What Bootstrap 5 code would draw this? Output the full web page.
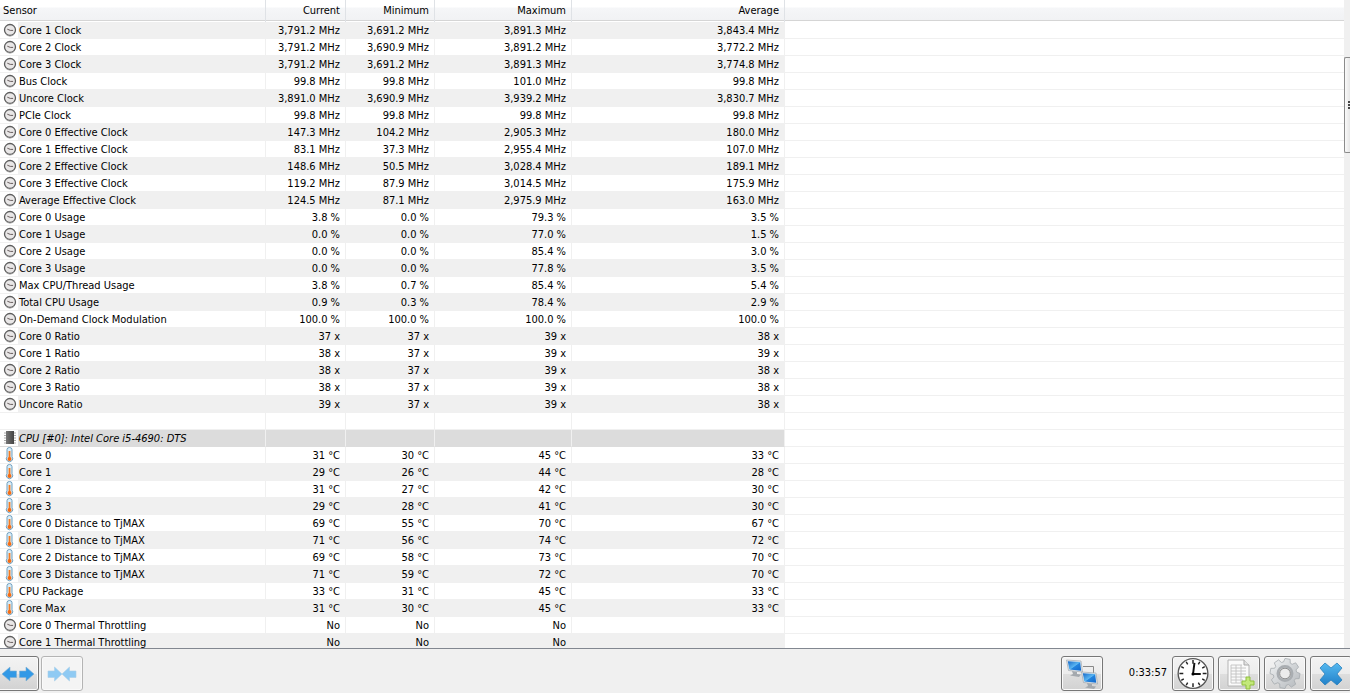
<!DOCTYPE html>
<html lang="en">
<head>
<meta charset="utf-8">
<meta name="viewport" content="width=device-width, initial-scale=1">
<title>Sensor Status</title>
<link href="https://cdn.jsdelivr.net/npm/bootstrap@5.3.0/dist/css/bootstrap.min.css" rel="stylesheet">
<style>
body { font-family: Tahoma, "DejaVu Sans Condensed", "Noto Sans", sans-serif; font-size: 11px; line-height: 16px; color: #000; background: #fff; }
.sensor-table { table-layout: fixed; border-collapse: separate; border-spacing: 0; white-space: nowrap; }
.sensor-table th { height: 22px; padding: 0 5px 0 0; font-weight: 400; text-align: right; border-right: 1px solid #dfe2e6; box-shadow: inset 0 -1px #fff, inset 0 -2px #d5d5d5; background: linear-gradient(#fff 7px, #f5f6f8 8px, #f1f2f4 20px); }
.sensor-table th:first-child { text-align: left; padding-left: 3px; }
.sensor-table th:last-child, .sensor-table td:last-child { border-right: 0; }
.sensor-table td { height: 17px; line-height: 14px; padding: 2px 5px 0 0; text-align: right; border-right: 1px solid #f0f0f0; border-bottom: 1px solid #f0f0f0; }
.sensor-table tbody tr:nth-child(odd) td:not(:last-child) { background: #f0f0f0; }
.sensor-table tbody tr.group-row td:not(:last-child) { background: #dcdcdc; border-bottom-color: #dcdcdc; }
.sensor-table tbody tr.group-row td:first-child { font-style: italic; }
.sensor-table td:first-child { padding: 0; text-align: left; }
.sensor-label { height: 16px; line-height: 18px; }
.sensor-icon { width: 18px; height: 16px; padding-left: 3px; margin-right: 1px; background: #fff; }
.sensor-icon svg { display: block; width: 14px; height: 16px; }
.scroll-track { width: 6px; padding-top: 57px; background: #f0f0f0; }
.scroll-thumb { height: 96px; border: 1px solid #8b8b8b; border-right: 0; border-radius: 2px 0 0 2px; background: linear-gradient(90deg, #fafafa, #e6e6e6); }
.scroll-grip { width: 2px; height: 8px; background: repeating-linear-gradient(#444 0 2px, #eee 2px 3px); }
.tool-bar { height: 45px; border-top: 1px solid #828790; background: #f0f0f0; padding-top: 7px; margin: 0 -2px 0 -3px; }
.tool-btn { width: 42px; height: 35px; border: 1px solid #777; border-radius: 3px; background: linear-gradient(#f3f3f3, #ececec 50%, #dedede 51%, #d2d2d2); box-shadow: inset 0 0 0 1px #fafafa; }
.tool-btn:disabled { border-color: #b4b4b4; background: #f4f4f4; opacity: 1; }
.tool-btn svg { display: block; }
.clock-text { line-height: 33px; margin: 0 5px 0 26px; }
.tool-gap { margin-left: 2px; }
</style>
</head>
<body class="vh-100 overflow-hidden d-flex flex-column">
<svg width="0" height="0" class="position-absolute" aria-hidden="true">
  <defs>
    <linearGradient id="chipFill"><stop stop-color="#777"/><stop offset="1" stop-color="#444"/></linearGradient>
    <linearGradient id="blueFill" x2="0" y2="1"><stop stop-color="#55b9f0"/><stop offset="1" stop-color="#2281c9"/></linearGradient>
    <linearGradient id="screenFill" x2="1" y2="1"><stop stop-color="#1769c8"/><stop offset=".5" stop-color="#5ab6f2"/><stop offset=".55" stop-color="#2484de"/><stop offset="1" stop-color="#1268cc"/></linearGradient>
    <linearGradient id="steelFill" x2="1" y2="1"><stop stop-color="#f2f4f5"/><stop offset="1" stop-color="#b3b7bb"/></linearGradient>
    <symbol id="gauge" viewBox="0 1 14 16"><circle cx="7" cy="9" r="5.500" fill="#e9e7e7" stroke="#5c5c5c" stroke-width="1.300"/><path d="M3 13.500a6 6 0 0 0 8 0" fill="none" stroke="#999" stroke-width=".8"/><path d="M4.300 8.200l3 1.200h2.800" fill="none" stroke="#665c5c" stroke-width="1"/></symbol>
    <symbol id="thermo" viewBox="0 0 14 16"><path d="M4 2.500a2.500 2 0 0 1 5 0v7.300a3.200 3 0 1 1-5 0z" fill="#d9edf8" stroke="#6f9fbf" stroke-width="1"/><path d="M6.500 4v8" stroke="#f57a20" stroke-width="1.800"/><circle cx="6.500" cy="12" r="2" fill="#f56c14"/></symbol>
    <symbol id="chip" viewBox="0 0 14 16"><path d="M1 3h12M1 5.500h12M1 8h12M1 10.500h12M1 13h12" stroke="#aaa"/><path d="M3 1h8v13H3z" fill="url(#chipFill)"/></symbol>
    <symbol id="screen" viewBox="0 0 19 19"><path d="M7 12l5 1v2l4 .5-2 2.500-9-1.500 3-1.500z" fill="#a4a9ae"/><path d="M1.500 1l14.500 1 1.500 11-14-1.500z" fill="#e3e8ec" stroke="#979ea4" stroke-width=".6"/><path d="M2.800 2.200l12.300.8 1.100 8.700-11.900-1.200z" fill="url(#screenFill)"/></symbol>
  </defs>
</svg>

<main class="d-flex flex-grow-1 overflow-hidden">
  <div class="flex-grow-1 overflow-hidden">
    <table class="sensor-table w-100">
      <colgroup><col style="width:266px"><col style="width:80px"><col style="width:89px"><col style="width:137px"><col style="width:213px"><col></colgroup>
      <thead><tr><th scope="col">Sensor</th><th scope="col">Current</th><th scope="col">Minimum</th><th scope="col">Maximum</th><th scope="col">Average</th><th></th></tr></thead>
      <tbody id="sensorRows"></tbody>
    </table>
  </div>
  <div class="scroll-track flex-shrink-0"><div class="scroll-thumb d-flex align-items-center justify-content-end"><div class="scroll-grip"></div></div></div>
</main>

<footer class="tool-bar flex-shrink-0 d-flex align-items-start">
  <button type="button" class="tool-btn p-0 d-flex align-items-center justify-content-center" aria-label="Expand columns"><svg width="34" height="20" viewBox="0 0 34 20" fill="#3299e6" stroke="#7faed0" stroke-width=".6"><path d="M1 10l8-7v4h6.500v6.500H9V17z"/><path d="M33 10l-8-7v4h-6.500v6.500H25V17z"/></svg></button>
  <button type="button" disabled class="tool-btn tool-gap p-0 d-flex align-items-center justify-content-center" aria-label="Shrink columns"><svg width="30" height="20" viewBox="0 0 30 20" fill="#8fcaf3" stroke="#a9cfe8" stroke-width=".6"><path d="M15 10L7.500 3v4H1v6.500h6.500V17z"/><path d="M15 10l7.500-7v4H29v6.500h-6.500V17z"/></svg></button>

  <button type="button" class="tool-btn p-0 ms-auto d-flex align-items-center justify-content-center" aria-label="Network"><svg width="34" height="32" viewBox="0 0 34 32"><path d="M18 8.500h10.500V16" fill="none" stroke="#888"/><use href="#screen" x="0" y="1" width="19" height="19"/><use href="#screen" x="15" y="13" width="19" height="19"/></svg></button>
  <span class="clock-text">0:33:57</span>
  <button type="button" class="tool-btn p-0 d-flex align-items-center justify-content-center" aria-label="Reset clock"><svg width="34" height="33" viewBox="0 0 34 34"><circle cx="17" cy="17" r="15.300" fill="#fff" stroke="#555" stroke-width="1.400"/><g stroke="#222" stroke-width="1.500"><path d="M17 3v4M17 27v4M3 17h4M27 17h4"/><path d="M10 4.900l1.500 2.600M22.500 26.500l1.500 2.600M4.900 10l2.600 1.500M26.500 22.500l2.600 1.500M24 4.900l-1.500 2.600M11.500 26.500L10 29.100M4.900 24l2.600-1.500M26.500 11.500l2.600-1.500"/></g><path d="M17 18l1.500-12M16 17.500h9" stroke="#111" stroke-width="2" fill="none"/><circle cx="17" cy="17.500" r="1.600"/></svg></button>
  <button type="button" class="tool-btn p-0 ms-1 d-flex align-items-center justify-content-center" aria-label="Add log"><svg width="32" height="32" viewBox="0 0 32 32"><path d="M5 2h16l5 5v21H5z" fill="#fafafa" stroke="#b4b4b4"/><path d="M21 2v5h5" fill="#e2e2e2" stroke="#aaa"/><path d="M8 7h11M8 10h15M8 13h15M8 16h15M8 19h15M8 22h12M8 25h12M8 7v18M13 7v18M18 7v18" stroke="#c2c2c2" stroke-width=".9" fill="none"/><path d="M23 19h4v4h4v4h-4v4h-4v-4h-4v-4h4z" fill="#c3e87a" stroke="#8fbf3d"/></svg></button>
  <button type="button" class="tool-btn p-0 ms-1 d-flex align-items-center justify-content-center" aria-label="Settings"><svg width="34" height="33" viewBox="-17 -17 34 34"><g fill="url(#steelFill)" stroke="#a5a9ad" stroke-width=".8" stroke-linejoin="round"><path id="gear"/></g><circle r="7.500" fill="none" stroke="#a9adb1" stroke-width="2.500"/><circle r="5.500" fill="#ececec" stroke="#888"/></svg></button>
  <button type="button" class="tool-btn p-0 ms-1 d-flex align-items-center justify-content-center" aria-label="Close"><svg width="26" height="26" viewBox="0 0 26 26"><path d="M2 7l5-5 6 5 6-5 5 5-5 6 5 6-5 5-6-5-6 5-5-5 5-6z" fill="url(#blueFill)" stroke="#2c82bd" stroke-width=".8"/></svg></button>
</footer>

<script src="https://cdn.jsdelivr.net/npm/bootstrap@5.3.0/dist/js/bootstrap.bundle.min.js"></script>
<script>
// icon | name | unit | current | minimum | maximum | average
const sensors = `gauge|Core 1 Clock| MHz|3,791.2|3,691.2|3,891.3|3,843.4
gauge|Core 2 Clock| MHz|3,791.2|3,690.9|3,891.2|3,772.2
gauge|Core 3 Clock| MHz|3,791.2|3,691.2|3,891.3|3,774.8
gauge|Bus Clock| MHz|99.8|99.8|101.0|99.8
gauge|Uncore Clock| MHz|3,891.0|3,690.9|3,939.2|3,830.7
gauge|PCIe Clock| MHz|99.8|99.8|99.8|99.8
gauge|Core 0 Effective Clock| MHz|147.3|104.2|2,905.3|180.0
gauge|Core 1 Effective Clock| MHz|83.1|37.3|2,955.4|107.0
gauge|Core 2 Effective Clock| MHz|148.6|50.5|3,028.4|189.1
gauge|Core 3 Effective Clock| MHz|119.2|87.9|3,014.5|175.9
gauge|Average Effective Clock| MHz|124.5|87.1|2,975.9|163.0
gauge|Core 0 Usage| %|3.8|0.0|79.3|3.5
gauge|Core 1 Usage| %|0.0|0.0|77.0|1.5
gauge|Core 2 Usage| %|0.0|0.0|85.4|3.0
gauge|Core 3 Usage| %|0.0|0.0|77.8|3.5
gauge|Max CPU/Thread Usage| %|3.8|0.7|85.4|5.4
gauge|Total CPU Usage| %|0.9|0.3|78.4|2.9
gauge|On-Demand Clock Modulation| %|100.0|100.0|100.0|100.0
gauge|Core 0 Ratio| x|37|37|39|38
gauge|Core 1 Ratio| x|38|37|39|39
gauge|Core 2 Ratio| x|38|37|39|38
gauge|Core 3 Ratio| x|38|37|39|38
gauge|Uncore Ratio| x|39|37|39|38
||||||
chip|CPU [#0]: Intel Core i5-4690: DTS|||||
thermo|Core 0| °C|31|30|45|33
thermo|Core 1| °C|29|26|44|28
thermo|Core 2| °C|31|27|42|30
thermo|Core 3| °C|29|28|41|30
thermo|Core 0 Distance to TjMAX| °C|69|55|70|67
thermo|Core 1 Distance to TjMAX| °C|71|56|74|72
thermo|Core 2 Distance to TjMAX| °C|69|58|73|70
thermo|Core 3 Distance to TjMAX| °C|71|59|72|70
thermo|CPU Package| °C|33|31|45|33
thermo|Core Max| °C|31|30|45|33
gauge|Core 0 Thermal Throttling||No|No|No|
gauge|Core 1 Thermal Throttling||No|No|No|`;
document.getElementById('sensorRows').innerHTML = sensors.split('\n').map(line => {
  const [icon, name, unit, ...values] = line.split('|');
  const label = icon ? `<div class="sensor-label d-flex"><span class="sensor-icon flex-shrink-0"><svg><use href="#${icon}"/></svg></span>${name}</div>` : '';
  const cells = values.map(v => `<td>${v ? v + unit : ''}</td>`).join('');
  return `<tr${icon === 'chip' ? ' class="group-row"' : ''}><td>${label}</td>${cells}<td></td></tr>`;
}).join('');

// Eight-toothed cog outline around the origin
const points = [];
for (let i = 0; i < 8; i++) {
  [[-17, 12], [-10, 15.5], [10, 15.5], [17, 12]].forEach(([deg, r]) => {
    const a = (i * 45 + 10 + deg) * Math.PI / 180;
    points.push((r * Math.cos(a)).toFixed(1) + ' ' + (r * Math.sin(a)).toFixed(1));
  });
}
document.getElementById('gear').setAttribute('d', 'M' + points.join('L') + 'Z');
</script>
</body>
</html>
